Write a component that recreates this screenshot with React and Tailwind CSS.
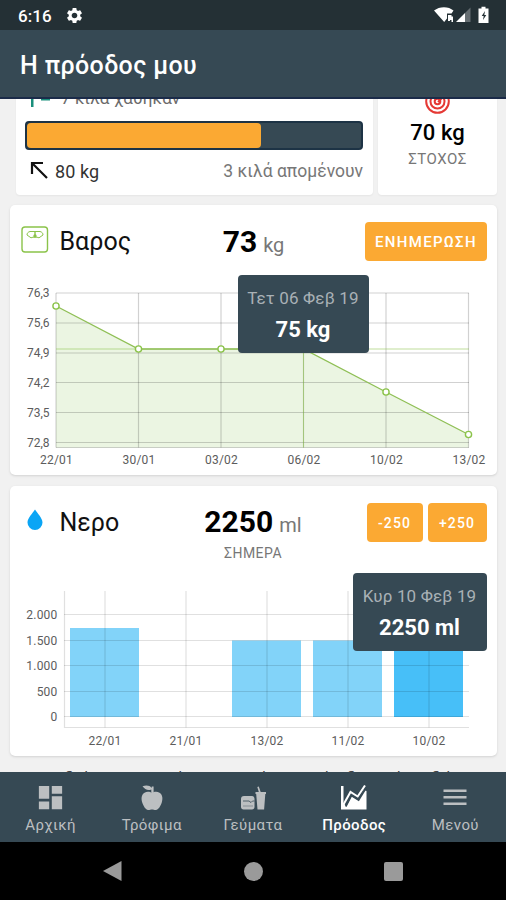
import React from 'react';
import { MdSettings, MdDashboard } from 'react-icons/md';

const weightPoints = [
  { x: 56, y: 306, label: '22/01' },
  { x: 138.5, y: 349, label: '30/01' },
  { x: 221, y: 349, label: '03/02' },
  { x: 303.5, y: 349, label: '06/02' },
  { x: 386, y: 392, label: '10/02' },
  { x: 468.5, y: 434.5, label: '13/02' },
];

const weightTicks = [
  { y: 293, label: '76,3' },
  { y: 323, label: '75,6' },
  { y: 353, label: '74,9' },
  { y: 382.5, label: '74,2' },
  { y: 412.5, label: '73,5' },
  { y: 442.5, label: '72,8' },
];

const waterDays = [
  { x: 104.5, top: 628, label: '22/01' },
  { x: 185.5, top: null, label: '21/01' },
  { x: 266.5, top: 640.5, label: '13/02' },
  { x: 347.5, top: 640.5, label: '11/02' },
  { x: 428.5, top: 602, label: '10/02', active: true },
];

const waterTicks = [
  { y: 614.5, label: '2.000' },
  { y: 640.5, label: '1.500' },
  { y: 665.5, label: '1.000' },
  { y: 691.5, label: '500' },
  { y: 716.5, label: '0' },
];

const StatusBar = () => (
  <div className="flex h-[30px] shrink-0 items-center justify-between bg-[#243035] pl-[18px] pr-[16px] text-white">
    <div className="flex items-center gap-[13px]">
      <span className="mt-[2px] text-[17px] font-medium leading-none tracking-[0.1px]">6:16</span>
      <MdSettings className="h-[19px] w-[19px]" />
    </div>
    <svg width="56" height="18" viewBox="0 0 56 18" fill="currentColor">
      <path d="M0 4.500C5.500 0 14.500 0 19.500 4.500L17.500 7.500H13v5L10.200 16z" />
      <path d="M14 9h3.500v1.500H19v5.500h-1.500v-2h-1.500v1h-2z" />
      <path d="M22 16 31 7v9z" />
      <path d="M31 7l5.500-5.500V16H31z" opacity=".3" />
      <path d="M44.500 2.500h3v-1.800h4v1.800h3v14.500h-10z" />
      <path d="M51 5l-3.300 5h2l-.7 4 3.300-5h-2z" fill="#243035" />
    </svg>
  </div>
);

const Tooltip = ({ className, date, value }) => (
  <div className={`absolute flex h-[78px] flex-col items-center rounded-[4px] bg-[#364954] ${className}`}>
    <span className="mt-[12px] whitespace-nowrap text-[17px] leading-[22px] tracking-[0.15px] text-[#a9b1b6]">{date}</span>
    <span className="mt-[8px] whitespace-nowrap text-[22px] font-bold leading-[26px] text-white">{value}</span>
  </div>
);

const OrangeButton = ({ className, children }) => (
  <button className={`h-[39px] rounded-[4px] bg-[#fba933] pt-[2px] font-medium text-white ${className}`}>
    {children}
  </button>
);

const ScaleIcon = () => (
  <svg width="28" height="28" viewBox="0 0 28 28" fill="none" stroke="#8bc34a" strokeWidth="1.4">
    <rect x="1" y="1" width="25.500" height="25" rx="3" />
    <path d="M9 5.500h10c2 .5 3 1.700 3 3.500l-4 2.800c-2.500-1-5.500-1-8 0L6 9c0-1.800 1-3 3-3.500z" strokeWidth="1" />
    <path d="M14 6v4" />
    <circle cx="14" cy="10" r="1" fill="#8bc34a" />
  </svg>
);

const WeightChart = () => {
  const line = weightPoints.map((p) => `${p.x},${p.y}`).join(' ');

  return (
    <svg className="block" width="487" height="205" viewBox="10 270 487 205" fontSize="12" fill="#5c5c5c">
      <polygon points={`56,447.500 ${line} 468.500,447.500`} fill="#ebf5e2" />
      <g stroke="#000" strokeOpacity=".18" strokeWidth="1.2">
        {weightTicks.map((t) => <path key={t.label} d={`M56 ${t.y}H469`} />)}
        {weightPoints.map((p) => <path key={p.label} d={`M${p.x} 293V447.5`} />)}
        <path d="M56 447.500H469" />
      </g>
      <path d="M56 349H469M303.500 349V447.500" stroke="#8bc34a" strokeOpacity=".55" fill="none" />
      <polyline points={line} fill="none" stroke="#8fbf55" strokeWidth="1.300" />
      {weightPoints.map((p) => (
        <circle key={p.label} cx={p.x} cy={p.y} r="3.100" fill="#fff" stroke="#8bc34a" strokeWidth="1.400" />
      ))}
      {weightTicks.map((t) => (
        <text key={t.label} x="49.500" y={t.y + 4} textAnchor="end">{t.label}</text>
      ))}
      {weightPoints.map((p) => (
        <text key={p.label} x={p.x + 0.5} y="464" textAnchor="middle" letterSpacing=".2">{p.label}</text>
      ))}
    </svg>
  );
};

const WaterChart = () => (
  <svg className="block" width="487" height="176" viewBox="10 580 487 176" fontSize="12" fill="#5c5c5c">
    {waterDays.filter((d) => d.top).map((d) => (
      <rect key={d.label} x={d.x - 34.5} y={d.top} width="69" height={717 - d.top} fill={d.active ? '#47bff8' : '#82d3f9'} />
    ))}
    <g stroke="#000" strokeOpacity=".12" strokeWidth="1.2">
      {waterTicks.map((t) => <path key={t.label} d={`M64 ${t.y}H469`} />)}
      {waterDays.map((d) => <path key={d.label} d={`M${d.x + 0.5} 591V727.5`} />)}
      <path d="M64.500 591V727.500H469" fill="none" />
    </g>
    {waterTicks.map((t) => (
      <text key={t.label} x="57.500" y={t.y + 4} textAnchor="end" letterSpacing=".2">{t.label}</text>
    ))}
    {waterDays.map((d) => (
      <text key={d.label} x={d.x + 0.5} y="744.500" textAnchor="middle" letterSpacing=".2">{d.label}</text>
    ))}
  </svg>
);

const AppleIcon = () => (
  <svg width="24" height="26" viewBox="0 0 24 26" fill="currentColor">
    <path d="M12 8c2-1.300 5-1.800 7.500-.3 3.200 2 3.500 6 2.200 10-1.200 3.600-3.500 7-5.700 7.300-1.500.2-2.500-.6-4-.6s-2.500.8-4 .6c-2.200-.3-4.500-3.700-5.700-7.300C1 13.700 1.300 9.700 4.500 7.700 7 6.200 10 6.700 12 8z" />
    <path d="M11.300 8V4.500C8 6 4.800 4.500 2.500 1.300 6 0 10 .3 11.500 3l.3-1.500h1.800V8z" />
  </svg>
);

const MealIcon = () => (
  <svg width="26" height="24" viewBox="0 0 26 24" fill="currentColor">
    <path d="M4 10h8c1.800 0 2.500 1.500 2.500 3v8c0 1.500-1 2.500-2.500 2.500H3.500C2 23.500 1 22.500 1 21v-8c0-1.800 1-3 3-3z" />
    <path d="M3 15h6l2 1.500L12.500 15h2" fill="none" stroke="#364954" strokeWidth=".8" />
    <path d="M3 20h10" fill="none" stroke="#364954" strokeWidth=".4" />
    <path d="M15.500 6h3.300l-1.500-5 1.500-.6L20.700 6H26v2h-.7l-1.200 15.500h-6.600L16.200 8h-.7z" />
  </svg>
);

// filled area with the trend line cut out above it
const ProgressIcon = () => (
  <svg width="28" height="25" viewBox="0 0 28 25" fill="none">
    <path d="M1 1h2.500v17.500l3 2.500 5-10 7 4.500L24 5l2.500 1v18.500H1z" fill="currentColor" />
    <path d="M5.700 21.500l5.700-11 7.200 4.500L26 3" stroke="#364954" strokeWidth="1.800" />
    <path d="M3.500 19.500 10.500 7l7.200 4.500L25 .5" stroke="currentColor" strokeWidth="2" />
  </svg>
);

const MenuIcon = () => (
  <svg width="24" height="24" viewBox="0 0 24 24" fill="currentColor">
    <path d="M.5 3.500h23v2.500H.5zM.5 10h23v2.500H.5zM.5 16.500h23v2.500H.5z" />
  </svg>
);

const tabs = [
  { label: 'Αρχική', icon: <MdDashboard className="h-[31px] w-[31px]" /> },
  { label: 'Τρόφιμα', icon: <AppleIcon /> },
  { label: 'Γεύματα', icon: <MealIcon /> },
  { label: 'Πρόοδος', icon: <ProgressIcon />, active: true },
  { label: 'Μενού', icon: <MenuIcon /> },
];

const App = () => {
  return (
    <div className="flex h-[900px] w-[506px] flex-col overflow-hidden bg-[#f1f1f1] font-['Roboto',sans-serif] text-black">
      <StatusBar />
      <header className="flex h-[69px] shrink-0 items-center border-b-2 border-[#1b2b49] bg-[#364954] pl-[20px] pt-[4px]">
        <h1 className="text-[25px] font-medium leading-none tracking-[0.35px] text-white">Η πρόοδος μου</h1>
      </header>

      <main className="flex h-[673px] shrink-0 flex-col overflow-hidden">
        <div className="flex h-[96px] shrink-0 items-end gap-[5px] pl-[16px] pr-[9px]">
          <section className="flex h-[116px] w-[357px] shrink-0 flex-col rounded-[4px] bg-white pl-[9px] pr-[10px] shadow-xs">
            <div className="flex h-[42px] items-center pl-[6px]">
              <svg className="mt-[-10px]" width="20" height="24" viewBox="0 0 20 24" fill="#1a8f7c">
                <path d="M0 2h2.500v22H0zM2 3h7l1 1.500h9v13h-9V14H2z" />
              </svg>
              <span className="ml-[10px] mt-[-3px] text-[17px] tracking-[0.1px] text-[#6b6b6b]">7 κιλά χάθηκαν</span>
            </div>
            <div className="h-[29px] shrink-0 rounded-[4px] border-2 border-[#1d3345] bg-[#364954]">
              <div className="h-full w-[234px] rounded-[4px] bg-[#fba933]" />
            </div>
            <div className="mt-[9px] flex h-[24px] items-center text-[18px]">
              <svg className="ml-[5px] mt-[-3px]" width="18" height="18" viewBox="0 0 18 18" fill="none" stroke="#111" strokeWidth="2.2">
                <path d="M2 13V2H13M2 2l15 15" />
              </svg>
              <span className="ml-[7px] tracking-[0.1px] text-[#333]">80 kg</span>
              <span className="ml-auto text-[17.5px] text-[#777]">3 κιλά απομένουν</span>
            </div>
          </section>
          <section className="flex h-[116px] flex-1 flex-col items-center rounded-[4px] bg-white shadow-xs">
            <svg className="mt-[10px] shrink-0" width="26" height="26" viewBox="0 0 26 26" fill="none" stroke="#e53935" strokeWidth="2">
              <circle cx="12.500" cy="12.500" r="11.300" />
              <circle cx="12.500" cy="12.500" r="7" />
              <circle cx="12.500" cy="12.500" r="2.800" />
              <path d="M13 13l10-10" />
            </svg>
            <span className="mt-[4px] text-[22px] font-medium leading-[28px] tracking-[0.1px]">70 kg</span>
            <span className="mt-[3px] text-[15px] leading-[18px] tracking-[0.5px] text-[#777]">ΣΤΟΧΟΣ</span>
          </section>
        </div>

        <section className="relative mx-auto mt-[10px] flex h-[270px] w-[487px] shrink-0 flex-col rounded-[5px] bg-white shadow-sm">
          <div className="flex h-[65px] shrink-0 items-center justify-between pl-[11px] pr-[10px] pt-[8px]">
            <div className="flex w-[180px] items-center gap-[11px]">
              <div className="-mt-[4px]">
                <ScaleIcon />
              </div>
              <h2 className="text-[25px] leading-none text-[#111]">Βαρος</h2>
            </div>
            <div className="flex items-baseline gap-[6px]">
              <span className="text-[30px] font-bold leading-none">73</span>
              <span className="text-[20px] leading-none text-[#777]">kg</span>
            </div>
            <div className="flex w-[180px] justify-end">
              <OrangeButton className="-mr-[1px] w-[122px] pr-[1px] text-[15px] tracking-[1.3px]">ΕΝΗΜΕΡΩΣΗ</OrangeButton>
            </div>
          </div>
          <WeightChart />
          <Tooltip className="left-[228px] top-[70px] w-[131px]" date="Τετ 06 Φεβ 19" value="75 kg" />
        </section>

        <section className="relative mx-auto mt-[11px] flex h-[270px] w-[487px] shrink-0 flex-col rounded-[5px] bg-white shadow-sm">
          <div className="flex h-[94px] shrink-0 items-start justify-between px-[10px] pt-[17px]">
            <div className="flex h-[38px] w-[150px] items-center gap-[16px] pl-[6px]">
              <svg className="-mt-[4px]" width="18" height="22" viewBox="0 0 18 22" fill="#0aa5f5">
                <path d="M9 .5C11.500 4.500 16.500 9 16.500 13.500a7.500 7.500 0 0 1-15 0C1.500 9 6.500 4.500 9 .5z" />
              </svg>
              <h2 className="text-[25px] leading-none text-[#111]">Νερο</h2>
            </div>
            <div className="flex flex-col items-center pt-[4px]">
              <div className="flex items-baseline gap-[6px]">
                <span className="text-[30px] font-bold leading-none">2250</span>
                <span className="text-[20px] leading-none text-[#777]">ml</span>
              </div>
              <span className="mt-[7px] text-[14px] leading-[18px] tracking-[0.5px] text-[#777]">ΣΗΜΕΡΑ</span>
            </div>
            <div className="flex w-[150px] justify-end gap-[5px]">
              <OrangeButton className="w-[56px] pr-[2px] text-[14px] tracking-[1.1px]">-250</OrangeButton>
              <OrangeButton className="-mr-[1px] w-[59px] pr-[2px] text-[14px] tracking-[1.1px]">+250</OrangeButton>
            </div>
          </div>
          <WaterChart />
          <Tooltip className="left-[343px] top-[87px] w-[134px]" date="Κυρ 10 Φεβ 19" value="2250 ml" />
        </section>

        <p className="mt-[11px] shrink-0 whitespace-nowrap pl-[36px] text-[17px] leading-[22px] text-[#444]">
          Αναδείξτε την Εικόνα σας. Μάθετε πώς δουλεύει εδώ
        </p>
      </main>

      <nav className="grid h-[70px] shrink-0 grid-cols-5 bg-[#364954]">
        {tabs.map((tab) => (
          <div key={tab.label} className={`flex flex-col items-center pt-[12px] ${tab.active ? 'text-white' : 'text-[#bcbfc1]'}`}>
            <div className="flex h-[27px] items-center justify-center">{tab.icon}</div>
            <span className={`mt-[4px] text-[15px] leading-[20px] tracking-[0.4px] ${tab.active ? 'font-medium' : ''}`}>{tab.label}</span>
          </div>
        ))}
      </nav>

      <div className="flex h-[58px] shrink-0 items-center bg-black pl-[102px] text-[#9a9a9a]">
        <svg width="20" height="22" viewBox="0 0 20 22" fill="currentColor">
          <path d="M1 11 19.500 1v20z" />
        </svg>
        <div className="ml-[122px] h-[19px] w-[19px] rounded-full bg-current" />
        <div className="ml-[121px] h-[19px] w-[19px] rounded-[2px] bg-current" />
      </div>
    </div>
  );
};

export default App;
